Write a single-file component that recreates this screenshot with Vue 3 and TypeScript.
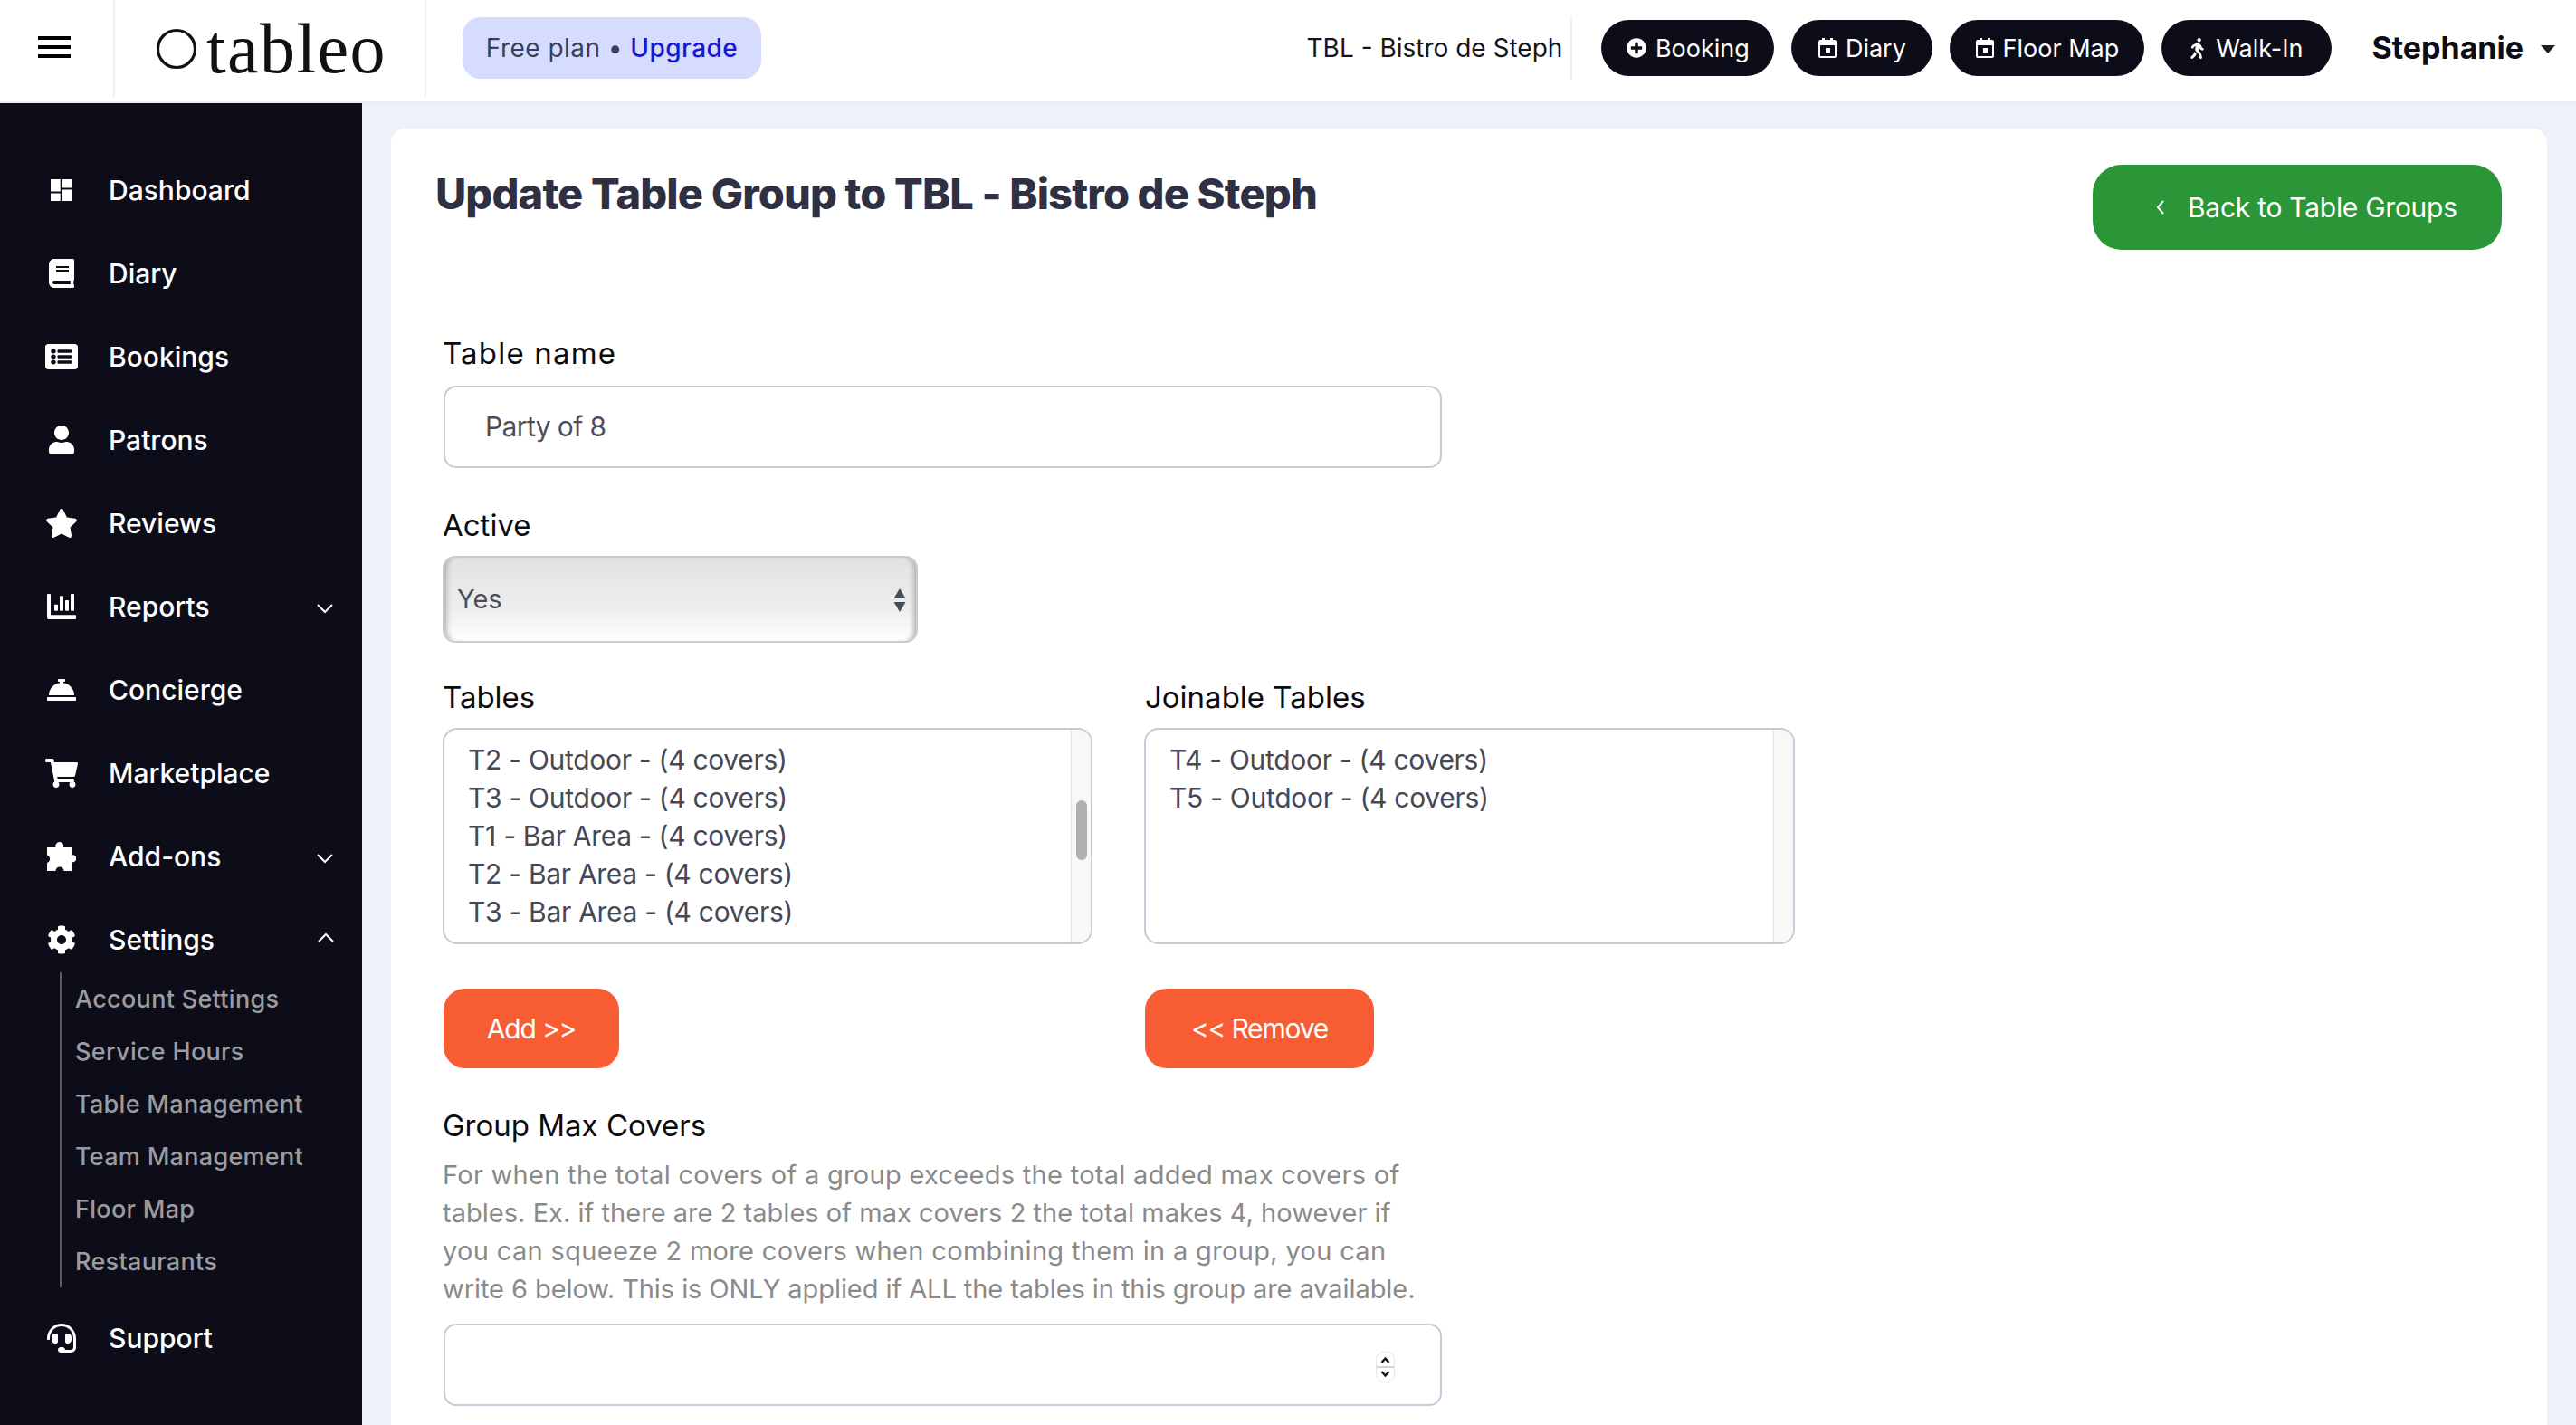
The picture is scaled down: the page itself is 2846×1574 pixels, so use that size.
<script setup lang="ts">
interface NavItem {
  label: string;
  view: string;
  w: number;
  h: number;
  d: string;
  chevron?: "up" | "down";
}

const navItems: NavItem[] = [
  { label: "Dashboard", view: "0 0 24 24", w: 24, h: 24, d: "M0 0h10.7v13.5H0zM12.3 0H24v9.5H12.3zM0 15.5h10.7V24H0zM12.3 11.5H24V24H12.3z" },
  { label: "Diary", view: "0 0 448 512", w: 28, h: 32, d: "M448 360V24c0-13.3-10.7-24-24-24H96C43 0 0 43 0 96v320c0 53 43 96 96 96h328c13.3 0 24-10.7 24-24v-16c0-7.5-3.5-14.3-8.9-18.7-4.2-15.4-4.2-59.3 0-74.7 5.4-4.3 8.9-11.1 8.9-18.6zM128 134c0-3.3 2.7-6 6-6h212c3.3 0 6 2.7 6 6v20c0 3.3-2.7 6-6 6H134c-3.3 0-6-2.7-6-6v-20zm0 64c0-3.3 2.7-6 6-6h212c3.3 0 6 2.7 6 6v20c0 3.3-2.7 6-6 6H134c-3.3 0-6-2.7-6-6v-20zm253.4 250H96c-17.7 0-32-14.3-32-32 0-17.6 14.4-32 32-32h285.4c-1.9 17.1-1.9 46.9 0 64z" },
  { label: "Bookings", view: "0 32 512 448", w: 36, h: 28, d: "M464 480H48c-26.51 0-48-21.49-48-48V80c0-26.51 21.49-48 48-48h416c26.51 0 48 21.49 48 48v352c0 26.51-21.49 48-48 48zM128 120c-22.091 0-40 17.909-40 40s17.909 40 40 40 40-17.909 40-40-17.909-40-40-40zm0 96c-22.091 0-40 17.909-40 40s17.909 40 40 40 40-17.909 40-40-17.909-40-40-40zm0 96c-22.091 0-40 17.909-40 40s17.909 40 40 40 40-17.909 40-40-17.909-40-40-40zm288-136v-32c0-6.627-5.373-12-12-12H204c-6.627 0-12 5.373-12 12v32c0 6.627 5.373 12 12 12h200c6.627 0 12-5.373 12-12zm0 96v-32c0-6.627-5.373-12-12-12H204c-6.627 0-12 5.373-12 12v32c0 6.627 5.373 12 12 12h200c6.627 0 12-5.373 12-12zm0 96v-32c0-6.627-5.373-12-12-12H204c-6.627 0-12 5.373-12 12v32c0 6.627 5.373 12 12 12h200c6.627 0 12-5.373 12-12z" },
  { label: "Patrons", view: "0 0 448 512", w: 28, h: 32, d: "M224 256c70.7 0 128-57.3 128-128S294.7 0 224 0 96 57.3 96 128s57.3 128 128 128zm89.6 32h-16.7c-22.2 10.2-46.9 16-72.9 16s-50.6-5.8-72.9-16h-16.7C60.2 288 0 348.2 0 422.4V464c0 26.5 21.5 48 48 48h352c26.5 0 48-21.5 48-48v-41.6c0-74.2-60.2-134.4-134.4-134.4z" },
  { label: "Reviews", view: "0 0 576 512", w: 36, h: 32, d: "M259.3 17.8L194 150.2 47.9 171.5c-26.2 3.8-36.7 36.1-17.7 54.6l105.7 103-25 145.5c-4.5 26.3 23.2 46 46.4 33.7L288 439.6l130.7 68.7c23.2 12.2 50.9-7.4 46.4-33.7l-25-145.5 105.7-103c19-18.5 8.5-50.8-17.7-54.6L382 150.2 316.7 17.8c-11.7-23.6-45.6-23.9-57.4 0z" },
  { label: "Reports", view: "0 64 512 384", w: 32, h: 28, chevron: "down", d: "M332.8 320h38.4c6.4 0 12.8-6.4 12.8-12.8V172.8c0-6.4-6.4-12.8-12.8-12.8h-38.4c-6.4 0-12.8 6.4-12.8 12.8v134.4c0 6.4 6.4 12.8 12.8 12.8zm96 0h38.4c6.4 0 12.8-6.4 12.8-12.8V76.8c0-6.4-6.4-12.8-12.8-12.8h-38.4c-6.4 0-12.8 6.4-12.8 12.8v230.4c0 6.4 6.4 12.8 12.8 12.8zm-288 0h38.4c6.4 0 12.8-6.4 12.8-12.8v-70.4c0-6.4-6.4-12.8-12.8-12.8h-38.4c-6.4 0-12.8 6.4-12.8 12.8v70.4c0 6.4 6.4 12.8 12.8 12.8zm96 0h38.4c6.4 0 12.8-6.4 12.8-12.8V108.8c0-6.4-6.4-12.8-12.8-12.8h-38.4c-6.4 0-12.8 6.4-12.8 12.8v198.4c0 6.4 6.4 12.8 12.8 12.8zM496 384H64V80c0-8.84-7.16-16-16-16H16C7.16 64 0 71.16 0 80v336c0 17.67 14.33 32 32 32h464c8.84 0 16-7.16 16-16v-32c0-8.84-7.16-16-16-16z" },
  { label: "Concierge", view: "0 0 512 512", w: 32, h: 32, d: "M288 130.54V112h16c8.84 0 16-7.16 16-16V80c0-8.84-7.16-16-16-16h-96c-8.84 0-16 7.16-16 16v16c0 8.84 7.16 16 16 16h16v18.54C115.49 146.11 32 239.18 32 352h448c0-112.82-83.49-205.89-192-221.46zM496 384H16c-8.84 0-16 7.16-16 16v32c0 8.84 7.16 16 16 16h480c8.84 0 16-7.16 16-16v-32c0-8.84-7.16-16-16-16z" },
  { label: "Marketplace", view: "0 0 576 512", w: 36, h: 32, d: "M528.12 301.319l47.273-208C578.806 78.301 567.391 64 551.99 64H159.208l-9.166-44.81C147.758 8.021 137.93 0 126.529 0H24C10.745 0 0 10.745 0 24v16c0 13.255 10.745 24 24 24h69.883l70.248 343.435C147.325 417.1 136 435.222 136 456c0 30.928 25.072 56 56 56s56-25.072 56-56c0-15.674-6.447-29.835-16.824-40h209.647C430.447 426.165 424 440.326 424 456c0 30.928 25.072 56 56 56s56-25.072 56-56c0-22.172-12.888-41.332-31.579-50.405l5.517-24.276c3.413-15.018-8.002-29.319-23.403-29.319H218.117l-6.545-32h293.145c11.206 0 20.92-7.754 23.403-18.681z" },
  { label: "Add-ons", view: "0 0 32 32", w: 32, h: 32, chevron: "down", d: "M0 6h9.500a4.500 4.500 0 1 1 8.500 0H27v8.500a4 4 0 1 1 0 7.500V32H18.500a4.500 4.500 0 1 0-9 0H0V23a4.500 4.500 0 0 0 0-8.500z" },
  { label: "Settings", view: "0 0 512 512", w: 32, h: 32, chevron: "up", d: "M487.4 315.7l-42.6-24.6c4.3-23.2 4.3-47 0-70.2l42.6-24.6c4.9-2.8 7.1-8.6 5.5-14-11.1-35.6-30-67.8-54.7-94.6-3.8-4.1-10-5.1-14.8-2.3L380.8 110c-17.9-15.4-38.5-27.3-60.8-35.1V25.8c0-5.6-3.9-10.5-9.4-11.7-36.7-8.2-74.3-7.8-109.2 0-5.5 1.2-9.4 6.1-9.4 11.7V75c-22.2 7.9-42.8 19.8-60.8 35.1L88.7 85.5c-4.9-2.8-11-1.9-14.8 2.3-24.7 26.7-43.6 58.9-54.7 94.6-1.7 5.4.6 11.2 5.5 14L67.3 221c-4.3 23.2-4.3 47 0 70.2l-42.6 24.6c-4.9 2.8-7.1 8.6-5.5 14 11.1 35.6 30 67.8 54.7 94.6 3.8 4.1 10 5.1 14.8 2.3l42.6-24.6c17.9 15.4 38.5 27.3 60.8 35.1v49.2c0 5.6 3.9 10.5 9.4 11.7 36.7 8.2 74.3 7.8 109.2 0 5.5-1.2 9.4-6.1 9.4-11.7v-49.2c22.2-7.9 42.8-19.8 60.8-35.1l42.6 24.6c4.9 2.8 11 1.9 14.8-2.3 24.7-26.7 43.6-58.9 54.7-94.6 1.5-5.5-.7-11.3-5.6-14.1zM256 336c-44.1 0-80-35.9-80-80s35.9-80 80-80 80 35.9 80 80-35.9 80-80 80z" },
];

const supportIcon =
  "M192 208c0-17.67-14.33-32-32-32h-16c-35.35 0-64 28.65-64 64v48c0 35.35 28.65 64 64 64h16c17.67 0 32-14.33 32-32V208zm176 144c35.35 0 64-28.65 64-64v-48c0-35.35-28.65-64-64-64h-16c-17.67 0-32 14.33-32 32v112c0 17.67 14.33 32 32 32h16zM256 0C113.18 0 4.58 118.83 0 256v16c0 8.84 7.16 16 16 16h16c8.84 0 16-7.16 16-16v-16c0-114.69 93.31-208 208-208s208 93.31 208 208h-.12c.08 2.43.12 165.72.12 165.72 0 23.35-18.93 42.28-42.28 42.28H320c0-26.51-21.49-48-48-48h-32c-26.51 0-48 21.49-48 48s21.49 48 48 48h181.72c49.86 0 90.28-40.42 90.28-90.28V256C507.42 118.83 398.82 0 256 0z";

const settingsLinks = [
  "Account Settings",
  "Service Hours",
  "Table Management",
  "Team Management",
  "Floor Map",
  "Restaurants",
];

const tables = [
  "T2 - Outdoor - (4 covers)",
  "T3 - Outdoor - (4 covers)",
  "T1 - Bar Area - (4 covers)",
  "T2 - Bar Area - (4 covers)",
  "T3 - Bar Area - (4 covers)",
];

const joinable = ["T4 - Outdoor - (4 covers)", "T5 - Outdoor - (4 covers)"];

const helpLines = [
  "For when the total covers of a group exceeds the total added max covers of",
  "tables. Ex. if there are 2 tables of max covers 2 the total makes 4, however if",
  "you can squeeze 2 more covers when combining them in a group, you can",
  "write 6 below. This is ONLY applied if ALL the tables in this group are available.",
];
</script>

<template>
  <div class="page">
    <header class="topbar">
      <div class="burger-cell">
        <span class="burger"><i /><i /><i /></span>
      </div>
      <div class="logo-cell">
        <svg class="logo-o" width="46" height="46" viewBox="0 0 46 46">
          <ellipse cx="23" cy="23" rx="20.5" ry="20.5" fill="none" stroke="#11110f" stroke-width="3.2" />
        </svg>
        <span class="logo-text">tableo</span>
      </div>
      <div class="plan">Free plan • <b>Upgrade</b></div>

      <div class="top-right">
        <span class="venue">TBL - Bistro de Steph</span>
        <span class="venue-line" />
        <a class="quick q-booking">
          <svg width="22" height="22" viewBox="0 0 512 512"><path fill="#fff" d="M256 8C119 8 8 119 8 256s111 248 248 248 248-111 248-248S393 8 256 8zm144 276c0 6.6-5.4 12-12 12h-92v92c0 6.6-5.4 12-12 12h-56c-6.6 0-12-5.4-12-12v-92h-92c-6.6 0-12-5.4-12-12v-56c0-6.6 5.4-12 12-12h92v-92c0-6.6 5.4-12 12-12h56c6.6 0 12 5.4 12 12v92h92c6.6 0 12 5.400 12 12v56z" /></svg>
          Booking
        </a>
        <a class="quick q-diary">
          <svg width="20" height="22" viewBox="0 0 20 22"><path fill="#fff" d="M4 0h3v2h6V0h3v2h2a2 2 0 0 1 2 2v16a2 2 0 0 1-2 2H2a2 2 0 0 1-2-2V4a2 2 0 0 1 2-2h2zM2 8v12h16V8zm6 3h5v5H8z" /></svg>
          Diary
        </a>
        <a class="quick q-floor">
          <svg width="20" height="22" viewBox="0 0 20 22"><path fill="#fff" d="M4 0h3v2h6V0h3v2h2a2 2 0 0 1 2 2v16a2 2 0 0 1-2 2H2a2 2 0 0 1-2-2V4a2 2 0 0 1 2-2h2zM2 8v12h16V8zm6 3h5v5H8z" /></svg>
          Floor Map
        </a>
        <a class="quick q-walk">
          <svg width="15" height="23" viewBox="0 0 320 512"><path fill="#fff" d="M208 96c26.5 0 48-21.5 48-48S234.5 0 208 0s-48 21.5-48 48 21.5 48 48 48zm94.5 149.1l-23.3-11.8-9.7-29.4c-14.7-44.6-55.7-75.8-102.2-75.9-36-.1-55.9 10.1-93.3 25.2-21.6 8.7-39.3 25.2-49.7 46.2L17.6 213c-7.8 15.8-1.5 35 14.2 42.9 15.6 7.9 34.6 1.5 42.5-14.3L81 228c3.5-7 9.3-12.5 16.5-15.4l26.8-10.8-15.2 60.7c-5.2 20.8.4 42.9 14.9 58.8l59.9 65.4c7.2 7.9 12.3 17.4 14.9 27.7l18.3 73.3c4.3 17.1 21.7 27.6 38.8 23.3 17.1-4.3 27.6-21.7 23.3-38.8l-22.2-89c-2.6-10.3-7.7-19.9-14.9-27.7l-45.5-49.7 17.2-68.7 5.5 16.5c5.3 16.1 16.7 29.4 31.7 37l23.3 11.8c15.6 7.9 34.6 1.5 42.5-14.3 7.7-15.7 1.4-35.1-14.3-43zM73.6 385.8c-3.2 8.1-8 15.4-14.2 21.5l-50 50.1c-12.5 12.5-12.5 32.8 0 45.3s32.7 12.5 45.2 0l59.4-59.4c6.1-6.1 10.9-13.4 14.2-21.5l13.5-33.8c-55.3-60.3-38.7-41.8-47.4-53.7l-20.7 51.5z" /></svg>
          Walk-In
        </a>
        <span class="user">Stephanie</span>
        <span class="caret" />
      </div>
    </header>

    <div class="body">
      <aside class="sidebar">
        <nav class="nav">
          <a v-for="item in navItems" :key="item.label" class="nav-row" :class="{ 'nav-row-open': item.chevron === 'up' }">
            <span class="nav-icon">
              <svg :width="item.w" :height="item.h" :viewBox="item.view" preserveAspectRatio="none"><path fill="#fff" :d="item.d" /></svg>
            </span>
            <span>{{ item.label }}</span>
            <svg v-if="item.chevron" class="nav-chevron" width="18" height="12" viewBox="0 0 18 12">
              <polyline
                fill="none"
                stroke="#fff"
                stroke-width="2"
                :points="item.chevron === 'up' ? '1,10 9,2 17,10' : '1,2 9,10 17,2'"
              />
            </svg>
          </a>
          <div class="subnav">
            <a v-for="link in settingsLinks" :key="link" class="sub-row">{{ link }}</a>
          </div>
          <a class="nav-row">
            <span class="nav-icon">
              <svg width="32" height="32" viewBox="0 0 512 512"><path fill="#fff" :d="supportIcon" /></svg>
            </span>
            <span>Support</span>
          </a>
        </nav>
      </aside>

      <main class="main">
        <section class="card">
          <div class="card-head">
            <h1>Update Table Group to TBL - Bistro de Steph</h1>
            <a class="back">
              <svg width="10" height="16" viewBox="0 0 10 16"><polyline fill="none" stroke="#fff" stroke-width="2" points="8,1 2,8 8,15" /></svg>
              Back to Table Groups
            </a>
          </div>

          <form class="form">
            <label class="label first">Table name</label>
            <input class="field name-field" type="text" value="Party of 8" readonly />

            <label class="label active">Active</label>
            <div class="select-wrap">
              <select class="select"><option>Yes</option></select>
              <svg class="select-arrows" width="14" height="26" viewBox="0 0 14 26">
                <path fill="#454d5a" d="M7 0l6.500 11H.5zM.5 15h13L7 26z" />
              </svg>
            </div>

            <div class="columns">
              <div class="col">
                <label class="label">Tables</label>
                <div class="listbox">
                  <div class="options">
                    <div v-for="t in tables" :key="t" class="option">{{ t }}</div>
                  </div>
                  <div class="track"><span class="thumb" /></div>
                </div>
                <button type="button" class="action add">Add &gt;&gt;</button>
              </div>
              <div class="col col-right">
                <label class="label">Joinable Tables</label>
                <div class="listbox">
                  <div class="options">
                    <div v-for="t in joinable" :key="t" class="option">{{ t }}</div>
                  </div>
                  <div class="track" />
                </div>
                <button type="button" class="action remove">&lt;&lt; Remove</button>
              </div>
            </div>

            <label class="label group">Group Max Covers</label>
            <p class="help">
              <span v-for="line in helpLines" :key="line">{{ line }}</span>
            </p>
            <div class="number-wrap">
              <input class="field" type="text" readonly />
              <span class="spinner">
                <svg width="21" height="34" viewBox="0 0 21 34">
                  <rect x=".5" y=".5" width="20" height="33" rx="8" fill="#fff" stroke="#e6e6e6" />
                  <rect x="1" y="16" width="19" height="2" fill="#d5d5d5" />
                  <polyline fill="none" stroke="#111" stroke-width="2.400" points="6.500,12 10.500,7.500 14.500,12" />
                  <polyline fill="none" stroke="#111" stroke-width="2.400" points="6.500,22 10.500,26.500 14.500,22" />
                </svg>
              </span>
            </div>
          </form>
        </section>
      </main>
    </div>
  </div>
</template>

<style>
html,
body {
  margin: 0;
  overflow: hidden;
  background: #eef1f9;
}
</style>

<style scoped>
.page {
  width: 2846px;
  height: 1574px;
  overflow: hidden;
  font-family: "Inter", "Noto Sans", sans-serif;
  display: flex;
  flex-direction: column;
}

.topbar {
  height: 112px;
  background: #fff;
  border-bottom: 2px solid #eceef3;
  display: flex;
  align-items: flex-start;
  flex: none;
}

.burger-cell {
  width: 125px;
  height: 107px;
  border-right: 2px solid #eeeeee;
  flex: none;
  display: flex;
  justify-content: center;
}

.burger {
  display: flex;
  flex-direction: column;
  justify-content: space-between;
  width: 36px;
  height: 24px;
  margin-top: 40px;
  margin-left: -5px;
}

.burger i {
  display: block;
  height: 4px;
  background: #000;
}

.logo-cell {
  width: 344px;
  height: 107px;
  border-right: 2px solid #eeeeee;
  flex: none;
  display: flex;
  align-items: center;
  padding-left: 45px;
  box-sizing: border-box;
}

.logo-o {
  flex: none;
}

.logo-text {
  font-family: "Liberation Serif", serif;
  font-size: 78px;
  line-height: 107px;
  color: #11110f;
  letter-spacing: 1.4px;
  margin-left: 10px;
}

.plan {
  margin: 19px 0 0 40px;
  width: 330px;
  height: 68px;
  line-height: 68px;
  text-align: center;
  border-radius: 20px;
  background: #d5dcfd;
  font-size: 28px;
  color: #3a3f5e;
  white-space: pre;
  letter-spacing: 0.45px;
}

.plan b {
  font-weight: 500;
  color: #1818d2;
}

.top-right {
  margin-left: auto;
  padding-right: 23px;
  height: 107px;
  display: flex;
  align-items: flex-start;
}

.venue {
  font-size: 28px;
  line-height: 106px;
  color: #15151a;
}

.venue-line {
  width: 2px;
  height: 70px;
  margin: 18px 32px 0 9px;
  background: #eeeeee;
}

.quick {
  margin-top: 22px;
  margin-right: 19px;
  height: 62px;
  border-radius: 31px;
  background: #0d0d1a;
  color: #fff;
  display: flex;
  align-items: center;
  justify-content: center;
  gap: 10px;
  font-size: 27px;
}

.q-booking {
  width: 191px;
}

.q-diary {
  width: 156px;
}

.q-floor {
  width: 215px;
}

.q-walk {
  width: 188px;
  margin-right: 0;
  gap: 13px;
}

.user {
  margin-left: 44px;
  font-size: 34px;
  line-height: 106px;
  font-weight: 700;
  color: #0d0d1a;
}

.caret {
  margin: 50px 0 0 19px;
  width: 0;
  height: 0;
  border-left: 8px solid transparent;
  border-right: 8px solid transparent;
  border-top: 9px solid #1c1c24;
}

.body {
  flex: 1;
  display: flex;
  min-height: 0;
}

.sidebar {
  width: 400px;
  flex: none;
  background: #0d0d1a;
  padding-top: 50px;
  box-sizing: border-box;
}

.nav {
  display: flex;
  flex-direction: column;
}

.nav-row {
  height: 92px;
  display: flex;
  align-items: center;
  padding: 0 32px 0 50px;
  color: #fff;
  font-size: 30px;
  font-weight: 500;
}

.nav-icon {
  width: 36px;
  margin-right: 34px;
  flex: none;
  display: flex;
  justify-content: center;
  align-items: center;
}

.nav-icon svg {
  display: block;
}

.nav-chevron {
  margin-left: auto;
  margin-top: 4px;
}

.nav-row-open .nav-chevron {
  margin-top: -4px;
  margin-right: -1px;
}

.subnav {
  margin: -10px 0 10px 66px;
  border-left: 2px solid #5c5c64;
  padding-left: 15px;
  color: #9c9ca0;
  font-size: 27px;
  letter-spacing: 0.3px;
}

.sub-row {
  height: 58px;
  display: flex;
  align-items: center;
  font-weight: 500;
}

.main {
  flex: 1;
  padding: 28px 32px 0;
  box-sizing: border-box;
  min-width: 0;
}

.card {
  height: 100%;
  background: #fff;
  border-radius: 16px 16px 0 0;
  padding: 40px 50px 0 49px;
  box-sizing: border-box;
}

.card-head {
  display: flex;
  justify-content: space-between;
  align-items: flex-start;
}

h1 {
  margin: 0;
  font-size: 47px;
  line-height: 64px;
  font-weight: 800;
  color: #2f3044;
  letter-spacing: -0.84px;
}

.back {
  width: 452px;
  height: 94px;
  border-radius: 32px;
  background: #2a9638;
  color: #fff;
  display: flex;
  align-items: center;
  font-size: 30px;
  letter-spacing: -0.27px;
  padding-left: 70px;
  box-sizing: border-box;
  gap: 25px;
}

.form {
  padding-left: 8px;
  display: flex;
  flex-direction: column;
  align-items: flex-start;
}

.label {
  display: block;
  height: 44px;
  line-height: 44px;
  margin-bottom: 12px;
  font-size: 33px;
  color: #0b0b0e;
}

.first {
  margin-top: 92px;
  margin-bottom: 14px;
  letter-spacing: 1.2px;
}

.active {
  margin-top: 41px;
}

.field {
  width: 1103px;
  height: 91px;
  box-sizing: border-box;
  border: 2.5px solid #c5cbd9;
  border-radius: 14px;
  padding: 0 44px;
  font: inherit;
  font-size: 30px;
  color: #4b4f5c;
  outline: none;
  background: #fff;
  display: block;
}

.name-field {
  letter-spacing: -0.6px;
  margin-left: 1px;
  padding-bottom: 2px;
}

.select-wrap {
  position: relative;
  width: 525px;
  height: 96px;
}

.select {
  width: 100%;
  height: 100%;
  appearance: none;
  border: 2.5px solid #c5cbd9;
  border-radius: 14px;
  padding: 0 14px 2px;
  font: inherit;
  font-size: 29px;
  color: #4b4f5c;
  background: linear-gradient(#e2e2e2, #eeeeee 62%, #ffffff);
  box-shadow:
    inset 7px 0 6px -5px #a9a9a9,
    inset -7px 0 6px -5px #a9a9a9;
}

.select-arrows {
  position: absolute;
  right: 13px;
  top: 36px;
}

.columns {
  margin-top: 38px;
  display: flex;
  gap: 57px;
}

.col {
  width: 718px;
}

.col-right {
  width: 719px;
}

.col-right .label {
  margin-left: 1px;
}

.listbox {
  height: 239px;
  box-sizing: border-box;
  border: 2.5px solid #c5cbd9;
  border-radius: 16px;
  display: flex;
  overflow: hidden;
}

.options {
  flex: 1;
  padding: 12px 26px;
}

.option {
  height: 42px;
  line-height: 42px;
  font-size: 30px;
  letter-spacing: -0.29px;
  color: #454857;
}

.track {
  width: 21px;
  flex: none;
  background: #f8f8f8;
  border-left: 1.5px solid #e4e4e4;
  position: relative;
}

.thumb {
  position: absolute;
  left: 5px;
  top: 78px;
  width: 12px;
  height: 66px;
  border-radius: 6px;
  background: #b0b0b0;
}

.action {
  display: block;
  margin-top: 49px;
  height: 88px;
  border: none;
  border-radius: 24px;
  background: #f75c33;
  color: #fff;
  font: inherit;
  font-size: 30px;
  letter-spacing: -1.2px;
}

.add {
  width: 194px;
  margin-left: 1px;
}

.remove {
  width: 253px;
  margin-left: 1px;
}

.group {
  margin-top: 41px;
}

.help {
  margin: 0 0 17px;
  font-size: 29px;
  line-height: 42px;
  color: #8a8a8a;
  white-space: nowrap;
}

.help span {
  display: block;
}

.help span:nth-child(1) {
  letter-spacing: 0.29px;
}

.help span:nth-child(2) {
  letter-spacing: 0.03px;
}

.help span:nth-child(3) {
  letter-spacing: 0.33px;
}

.help span:nth-child(4) {
  letter-spacing: -0.07px;
}

.number-wrap {
  position: relative;
  margin-left: 1px;
}

.spinner {
  position: absolute;
  left: 1030px;
  top: 31px;
  display: block;
}

.spinner svg {
  display: block;
}
</style>
